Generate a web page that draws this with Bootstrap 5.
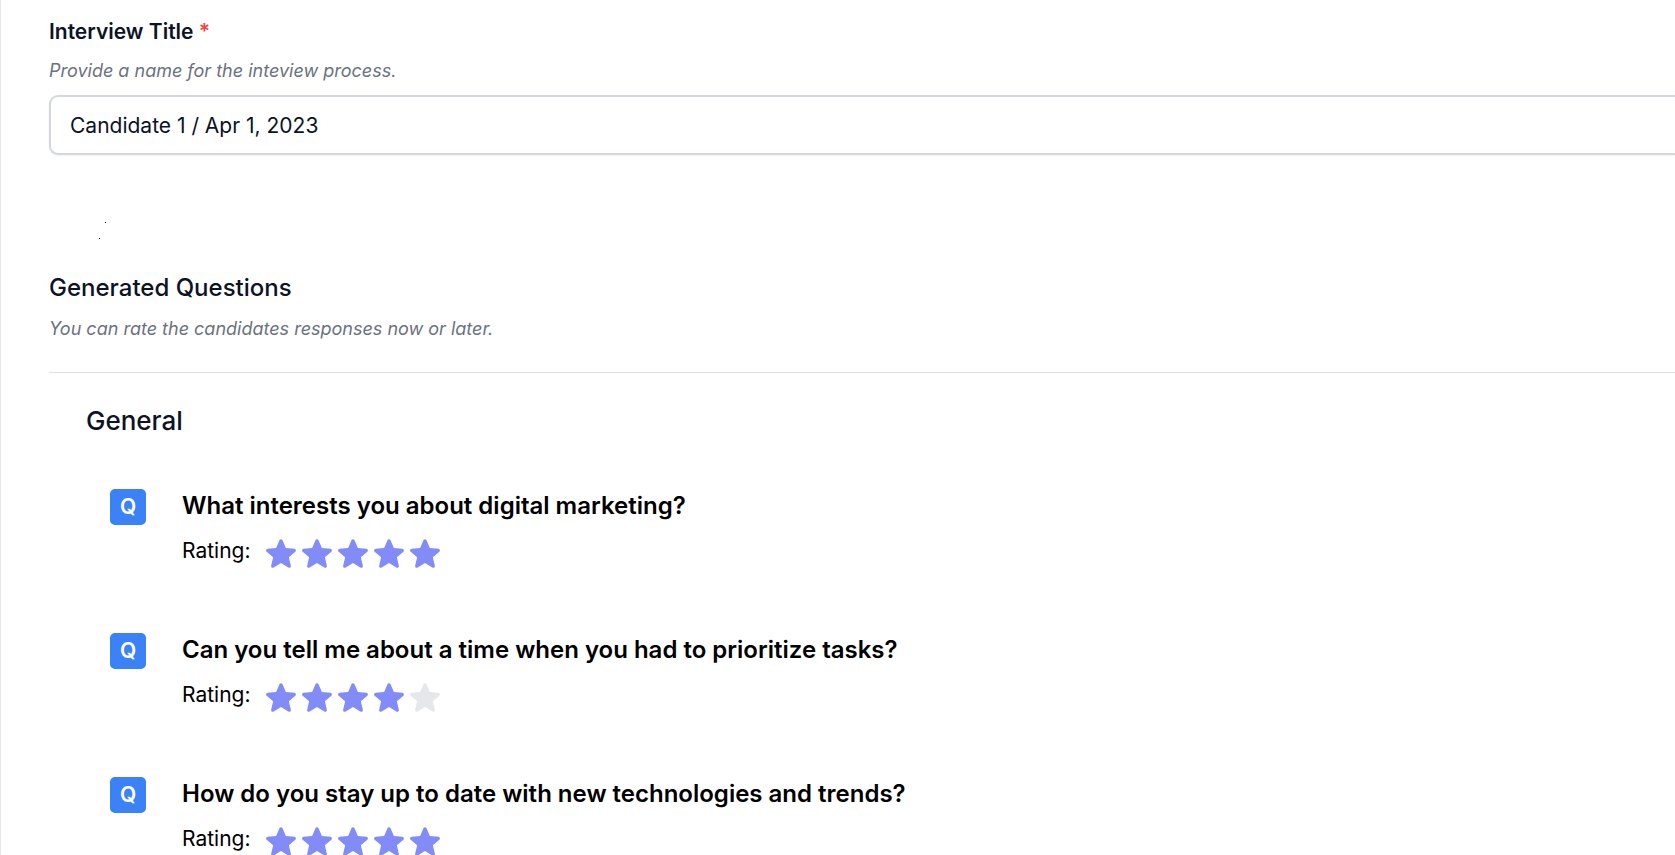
<!DOCTYPE html>
<html lang="en">
<head>
<meta charset="utf-8">
<meta name="viewport" content="width=device-width, initial-scale=1">
<title>Interview</title>
<link href="https://cdn.jsdelivr.net/npm/bootstrap@5.3.0/dist/css/bootstrap.min.css" rel="stylesheet">
<style>
  body { font-family: Inter, "Liberation Sans", sans-serif; font-size: 21px; line-height: 32px; color: #000; }
  .panel { border-left: 1px solid #e5e7eb; padding: 16px 0 0 48px; min-height: 100vh; }
  .ink { color: #0b1324; }
  .field-label { line-height: 32px; }
  .required { color: #ef4444; }
  .hint { font-size: 18px; line-height: 30px; color: #6b7280; font-style: italic; }
  .title-input { height: 60px; margin-top: 9px; padding: 0 19px; font-size: 21px; border: 2px solid #d4d7dd; border-right: 0; border-radius: 9px 0 0 9px; box-shadow: 0 1px 2px rgba(0, 0, 0, .06); }
  .dots { height: 115px; padding: 66px 0 0 48px; }
  .section-title { font-size: 24px; line-height: 36px; }
  .rule { margin: 28px 0; border-top: 1px solid #dfe1e6; opacity: 1; }
  .group { padding-left: 37px; }
  .group-title { font-size: 26px; line-height: 40px; margin-bottom: 48px; }
  .question-list { padding-left: 24px; }
  .question { gap: 36px; min-height: 144px; }
  .q-mark { width: 36px; height: 36px; border-radius: 5px; background: #3b82f6; }
  .q-title { font-size: 24px; line-height: 34px; margin-bottom: 12px; }
  .rating-label { margin-right: 12px; }
  .star { width: 36px; height: 36px; color: #818cf8; }
  .star.empty { color: #e5e7eb; }
</style>
</head>
<body class="bg-white">
<main class="panel">
  <label for="title" class="field-label fw-semibold ink d-block">Interview Title <span class="required">*</span></label>
  <p id="title-hint" class="hint mt-2 mb-0">Provide a name for the inteview process.</p>
  <input id="title" type="text" class="form-control title-input ink" value="Candidate 1 / Apr 1, 2023" aria-describedby="title-hint" required>

  <div class="dots" aria-hidden="true">
    <svg class="d-block" width="10" height="20" shape-rendering="crispEdges"><path d="M8 1h1v1h-1zM2 17h1v1h-1z"/></svg>
  </div>

  <section>
    <h2 class="section-title ink mb-2">Generated Questions</h2>
    <p class="hint mb-0">You can rate the candidates responses now or later.</p>
    <hr class="rule">
    <div class="group">
      <h3 class="group-title ink">General</h3>
      <div class="question-list" id="questions"></div>
    </div>
  </section>
</main>
<script src="https://cdn.jsdelivr.net/npm/bootstrap@5.3.0/dist/js/bootstrap.bundle.min.js"></script>
<script>
  const questions = [
    ["What interests you about digital marketing?", 5],
    ["Can you tell me about a time when you had to prioritize tasks?", 4],
    ["How do you stay up to date with new technologies and trends?", 5]
  ];
  const star = '<svg class="d-block" viewBox="0 0 20 20" fill="currentColor" aria-hidden="true"><path d="M10.868 2.884c-.321-.772-1.415-.772-1.736 0l-1.83 4.401-4.753.381c-.833.067-1.171 1.107-.536 1.651l3.62 3.102-1.106 4.637c-.194.813.691 1.456 1.405 1.02L10 15.591l4.069 2.485c.713.436 1.598-.207 1.404-1.02l-1.106-4.637 3.62-3.102c.635-.544.297-1.584-.536-1.65l-4.752-.382-1.831-4.401z"/></svg>';
  document.getElementById("questions").innerHTML = questions.map(([text, rating]) => `
    <article class="question d-flex align-items-start">
      <span class="q-mark d-flex align-items-center justify-content-center flex-shrink-0 fw-semibold text-white">Q</span>
      <div>
        <h4 class="q-title fw-semibold">${text}</h4>
        <div class="d-flex align-items-start">
          <span class="rating-label">Rating:</span>
          <div class="d-flex" role="group" aria-label="Rating">
            ${[1, 2, 3, 4, 5].map(n => `<button type="button" class="star border-0 bg-transparent p-0${n > rating ? " empty" : ""}" aria-label="${n} of 5">${star}</button>`).join("")}
          </div>
        </div>
      </div>
    </article>`).join("");
</script>
</body>
</html>
